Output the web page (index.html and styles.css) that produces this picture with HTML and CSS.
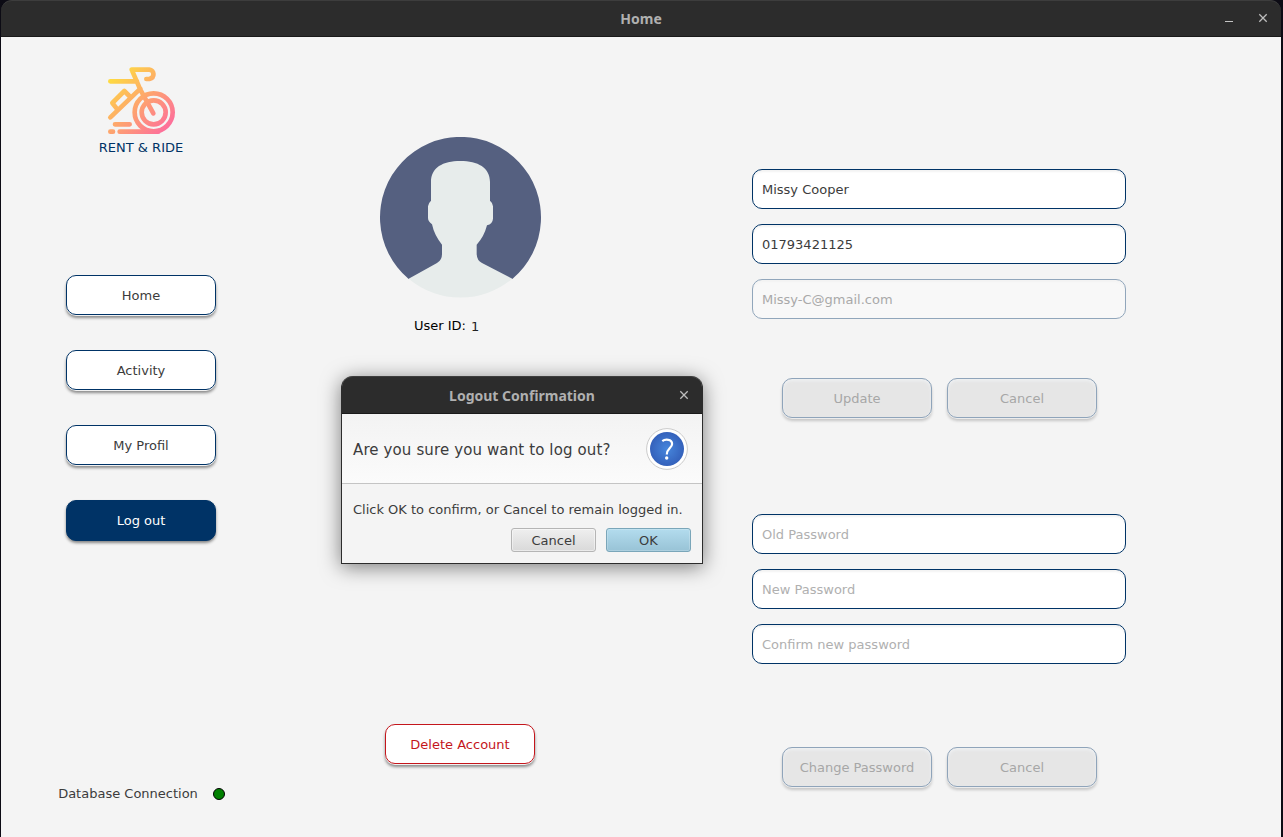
FILE: index.html
```html
<!DOCTYPE html>
<html lang="en">
<head>
<meta charset="utf-8">
<title>Home</title>
<link rel="stylesheet" href="styles.css">
</head>
<body>
<div class="window">
  <header class="titlebar">
    <span class="title">Home</span>
    <div class="controls">
      <svg width="10" height="12" viewBox="0 0 10 12"><path d="M1 8.5H9" stroke="#c4c4c4"/></svg>
      <svg width="10" height="12" viewBox="0 0 10 12"><path d="M1.300 1.300L8.700 8.700M8.700 1.300L1.300 8.700" stroke="#bdbdbd" stroke-width="1.300"/></svg>
    </div>
  </header>
  <main class="content">
    <aside class="sidebar">
      <div class="brand">
        <svg class="logo" viewBox="48 27 210 210" fill="none" stroke="url(#g)" stroke-width="14" stroke-linecap="round" stroke-linejoin="round">
          <defs><linearGradient id="g" gradientUnits="userSpaceOnUse" x1="75" y1="55" x2="235" y2="215"><stop offset="0" stop-color="#fedb41"/><stop offset="1" stop-color="#fd6e9b"/></linearGradient></defs>
          <path d="M125 41H178C193 42 196 65 178 69L169 69M125 41L151 101L190 172M61 76.010H141M61 184L151 98M82 160L67 141L103 105L118 120"/>
          <circle cx="191" cy="169" r="57"/><circle cx="191" cy="169" r="36"/>
          <path d="M75 205.010H119M61 227.010H69M89 227.010H205"/>
        </svg>
        <span class="brand-name">RENT &amp; RIDE</span>
      </div>
      <nav class="nav">
        <button class="btn">Home</button>
        <button class="btn">Activity</button>
        <button class="btn">My Profil</button>
        <button class="btn active">Log out</button>
      </nav>
      <div class="status"><span>Database Connection</span><i class="dot"></i></div>
    </aside>
    <section class="profile">
      <svg class="avatar" viewBox="30 36 483 483">
        <path fill="#556080" d="M116 462A241.500 241.500 0 1 1 427 462Z"/>
        <path fill="#e7eceb" d="M183 227V171C183 128 218 108 271 108S360 128 360 171V227Q369 234 369 244V281Q368 296 351 301Q342 336 320 359V387Q321 407 336 414L427 461A241.500 241.500 0 0 1 116 461L201 414Q216 406 216 387V359Q193 331 186 298Q174 289 174 279V244Q175 234 183 227Z"/>
      </svg>
      <div class="user-id"><span>User ID:</span><span class="id-value">1</span></div>
      <button class="btn danger">Delete Account</button>
    </section>
    <section class="forms">
      <div class="fields">
        <div class="field">Missy Cooper</div>
        <div class="field">01793421125</div>
        <div class="field disabled">Missy-C@gmail.com</div>
      </div>
      <div class="actions">
        <button class="btn off">Update</button>
        <button class="btn off">Cancel</button>
      </div>
      <div class="fields passwords">
        <div class="field prompt">Old Password</div>
        <div class="field prompt">New Password</div>
        <div class="field prompt">Confirm new password</div>
      </div>
      <div class="actions last">
        <button class="btn off">Change Password</button>
        <button class="btn off">Cancel</button>
      </div>
    </section>
  </main>
</div>
<div class="dialog">
  <header class="titlebar dialog-bar">
    <span class="title">Logout Confirmation</span>
    <div class="controls">
      <svg width="10" height="12" viewBox="0 0 10 12"><path d="M1.300 2.300L8.700 9.700M8.700 2.300L1.300 9.700" stroke="#bdbdbd" stroke-width="1.300"/></svg>
    </div>
  </header>
  <div class="dialog-head">
    <span class="heading">Are you sure you want to log out?</span>
    <span class="question">
      <svg width="42" height="42" viewBox="0 0 42 42" fill="none">
        <defs><radialGradient id="q"><stop offset="0" stop-color="#4786dc"/><stop offset="1" stop-color="#3461bb"/></radialGradient></defs>
        <circle cx="21" cy="21" r="20.400" fill="#fff" stroke="#cbcbcb"/>
        <circle cx="21" cy="21" r="17" fill="url(#q)"/>
        <path d="M16.300 13.200C19 11 26.100 10.800 26.100 16C26.100 20 20.800 20.500 20.800 26.500" stroke="#fff" stroke-width="2.200"/>
        <circle cx="20.700" cy="30" r="1.700" fill="#fff"/>
      </svg>
    </span>
  </div>
  <div class="dialog-body">
    <p class="message">Click OK to confirm, or Cancel to remain logged in.</p>
    <div class="dialog-actions">
      <button class="small">Cancel</button>
      <button class="small ok">OK</button>
    </div>
  </div>
</div>
</body>
</html>
```
FILE: styles.css
```css
* { box-sizing: border-box; }
body {
  margin: 0;
  height: 837px;
  overflow: hidden;
  background: #0c0b14;
  font: 13px/16px "DejaVu Sans", sans-serif;
  color: #3c3c3c;
}
button { font: inherit; color: inherit; margin: 0; padding: 0; }
svg { display: block; }
.window {
  display: flex;
  flex-direction: column;
  width: 1280px;
  height: 837px;
  margin-left: 1px;
}
.titlebar {
  display: grid;
  grid-template-columns: 1fr auto 1fr;
  align-items: center;
  height: 37px;
  background: #2c2c2c;
  border-top: 1px solid #3d3d3d;
  border-bottom: 1px solid #1a1a1a;
  border-radius: 11px 11px 0 0;
  flex: none;
}
.title {
  grid-column: 2;
  font: bold 14px/18px "Noto Sans", sans-serif;
  color: #b0b0b0;
}
.controls {
  display: flex;
  justify-content: flex-end;
  gap: 24px;
  padding-right: 13px;
}
.content {
  flex: 1;
  display: grid;
  grid-template-columns: 280px 359px 1fr;
  background: #f4f4f4;
}
.sidebar, .profile {
  display: flex;
  flex-direction: column;
  align-items: center;
}
.brand {
  display: flex;
  flex-direction: column;
  align-items: center;
  height: 238px;
  padding-top: 28px;
}
.logo { width: 70px; height: 70px; }
.brand-name { margin-top: 5px; color: #003366; }
.nav { display: flex; flex-direction: column; gap: 35px; }
.btn {
  width: 150px;
  height: 40px;
  flex: none;
  padding-top: 1px;
  background: #fff;
  border: 1px solid #003366;
  border-radius: 10px;
  box-shadow: 0 1px 0 #f1f1f1, 0 3px 3px rgba(0, 0, 0, 0.43);
}
.btn.active {
  height: 41px;
  padding: 0;
  background: #003366;
  color: #fff;
  box-shadow: 0 2px 3px rgba(0, 0, 0, 0.45);
}
.btn.danger {
  margin: 389px 1px 0 0;
  align-self: flex-start;
  margin-left: 104px;
  color: #c4161c;
  border-color: #c4161c;
}
.btn.off {
  background: #e6e6e6;
  border-color: #8fa4ba;
  color: #a7a7a7;
  box-shadow: 0 1px 0 #ececec, 0 3px 3px rgba(0, 0, 0, 0.19), inset 0 2px 3px #eef0f2;
}
.status {
  display: flex;
  align-items: center;
  gap: 15px;
  margin: 244px 0 0 1px;
}
.status span { padding-top: 1px; }
.dot {
  width: 12px;
  height: 12px;
  border: 1px solid #000;
  border-radius: 50%;
  background: #008000;
}
.avatar { width: 161px; height: 161px; margin-top: 100px; }
.user-id {
  display: flex;
  gap: 5px;
  width: 93px;
  height: 17px;
  margin-top: 20px;
  color: #000;
}
.id-value { padding-top: 1px; color: #222; }
.forms { padding: 132px 0 0 112px; }
.fields { display: flex; flex-direction: column; gap: 15px; width: 374px; }
.field {
  height: 40px;
  padding: 12px 9px 10px;
  background: #fff;
  border: 1px solid #003366;
  border-radius: 10px;
  box-shadow: inset 0 2px 2px #f3f3f3;
}
.field.disabled { background: #f8f8f8; border-color: #91a6bb; color: #a9a9a9; }
.field.prompt { color: #b0b0b0; }
.actions { display: flex; gap: 15px; margin: 59px 0 0 30px; }
.passwords { margin-top: 96px; }
.actions.last { margin-top: 83px; }
.dialog {
  position: absolute;
  left: 341px;
  top: 376px;
  width: 362px;
  height: 188px;
  display: flex;
  flex-direction: column;
  border: 1px solid #2c2c2c;
  border-top: 0;
  border-radius: 12px 12px 0 0;
  background: #f4f4f4;
  box-shadow: 0 3px 20px rgba(0, 0, 0, 0.5);
}
.dialog-bar { height: 38px; }
.dialog-bar .title { padding-top: 1px; }
.dialog-head {
  display: flex;
  align-items: center;
  justify-content: space-between;
  height: 70px;
  padding: 1px 14px 0 11px;
  border-bottom: 1px solid #c4c4c4;
  background: linear-gradient(#f3f3f3, #fbfbfb);
}
.heading {
  padding-top: 2px;
  font-size: 15px;
  line-height: 18px;
  letter-spacing: 0.12px;
}
.dialog-body { padding: 18px 11px 0; }
.message { margin: 0; white-space: nowrap; }
.dialog-actions {
  display: flex;
  justify-content: flex-end;
  gap: 10px;
  margin-top: 10px;
}
.small {
  width: 85px;
  height: 24px;
  padding-top: 1px;
  border: 1px solid #b5b5b5;
  border-radius: 3px;
  background: linear-gradient(#efefef, #d9d9d9);
  box-shadow: inset 0 0 0 1px rgba(255, 255, 255, 0.45);
}
.small.ok {
  border-color: #7aa6b9;
  background: linear-gradient(#b3dcee, #98c3d6);
  box-shadow: inset 0 0 0 1px rgba(255, 255, 255, 0.2);
}
```
